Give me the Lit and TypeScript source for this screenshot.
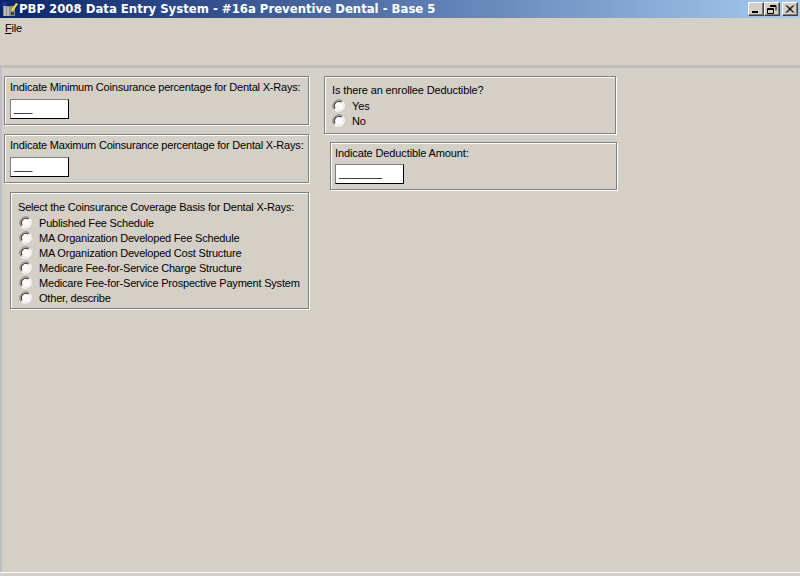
import { LitElement, html, css } from "lit";
import { customElement } from "lit/decorators.js";

const radio = html`<svg class="radio" width="13" height="13" viewBox="0 0 13 13">
  <circle cx="6.5" cy="6.5" r="4.6" fill="#fbfaf8"/>
  <path d="M1.9 10.2A6 6 0 0 1 10.2 1.9" fill="none" stroke="#808080" stroke-width="1"/>
  <path d="M3 9.3A4.6 4.6 0 0 1 9.3 3" fill="none" stroke="#303030" stroke-width="1.1"/>
  <path d="M11.1 2.8A6 6 0 0 1 2.8 11.1" fill="none" stroke="#ffffff" stroke-width="1.2"/>
</svg>`;

@customElement("app-root")
export class AppRoot extends LitElement {
  static styles = css`
    :host {
      display: flex;
      flex-direction: column;
      width: 800px;
      height: 576px;
      background: #d4d0c8;
      color: #000;
      font-family: "Liberation Sans", Arial, sans-serif;
      font-size: 11px;
      letter-spacing: -0.2px;
      line-height: 15px;
      overflow: hidden;
    }
    .title {
      height: 18px;
      flex: none;
      display: flex;
      align-items: center;
      background: linear-gradient(90deg, #0a246a 0%, #a6caf0 100%);
      color: #fff;
      font: bold 11.7px/18px "DejaVu Sans", Verdana, sans-serif;
      letter-spacing: 0;
      white-space: nowrap;
    }
    .appicon { flex: none; margin: 0 1px 0 2px; }
    .title-text { flex: 1; }
    .winbtns { display: flex; margin-right: 2px; }
    .winbtn {
      width: 16px;
      height: 14px;
      box-sizing: border-box;
      background: #d4d0c8;
      border: 1px solid;
      border-color: #fff #404040 #404040 #fff;
      box-shadow: inset -1px -1px 0 #808080;
      display: flex;
      align-items: center;
      justify-content: center;
    }
    .winbtn.gap { margin-right: 2px; }
    .menu {
      height: 47px;
      flex: none;
      box-sizing: border-box;
      padding: 3px 0 0 5px;
    }
    .band { height: 3px; flex: none; background: #bfbdb8; }
    .content {
      flex: none;
      height: 504px;
      border-left: 2px solid #bfbfc4;
      box-sizing: border-box;
      display: flex;
      align-items: flex-start;
    }
    .col-left {
      width: 307px;
      flex: none;
      padding-top: 8px;
      margin-left: 2px;
      display: flex;
      flex-direction: column;
      gap: 9px;
    }
    .col-right {
      margin-left: 13px;
      padding-top: 8px;
      display: flex;
      flex-direction: column;
      gap: 8px;
    }
    .group {
      box-sizing: border-box;
      border: 1px solid #808080;
      box-shadow: 1px 1px 0 #fff, inset 1px 1px 0 #fff;
    }
    .g-min { width: 305px; height: 49px; padding: 3px 0 0 5px; }
    .g-basis { width: 299px; height: 117px; margin-left: 6px; padding: 7px 0 0 7px; }
    .g-basis .label { margin-bottom: 1px; }
    .g-ded { width: 292px; height: 58px; padding: 6px 0 0 7px; letter-spacing: -0.12px; }
    .g-ded .label { margin-bottom: 1px; }
    .g-ded .radio { margin-left: 0; }
    .g-amt { width: 287px; height: 48px; margin-left: 6px; padding: 3px 0 0 4px; letter-spacing: -0.12px; }
    .label { height: 15px; white-space: nowrap; }
    .field {
      box-sizing: border-box;
      height: 20px;
      width: 59px;
      margin-top: 4px;
      background: #fff;
      border: 1px solid;
      border-color: #808080 #000 #000 #808080;
      padding-left: 3px;
      letter-spacing: 0;
      line-height: 17px;
      white-space: nowrap;
      overflow: hidden;
    }
    .field.wide { width: 69px; margin-top: 3px; }
    .row { display: flex; align-items: center; height: 15px; white-space: nowrap; }
    .radio { flex: none; margin: 0 0 2px 1px; }
    .row span { margin-left: 7px; }
    .foot { flex: none; height: 1px; background: #fff; }
  `;

  render() {
    const basis = [
      "Published Fee Schedule",
      "MA Organization Developed Fee Schedule",
      "MA Organization Developed Cost Structure",
      "Medicare Fee-for-Service Charge Structure",
      "Medicare Fee-for-Service Prospective Payment System",
      "Other, describe",
    ];
    return html`
      <div class="title">
        <svg class="appicon" width="16" height="16" viewBox="0 0 16 16">
          <rect x="0" y="1" width="5" height="5" fill="#1c2fa8"/>
          <path d="M1 5h12v10H1z" fill="#8f8f8f"/>
          <path d="M3 5v10M6 6v9" stroke="#e8e8e8" stroke-width="1"/>
          <path d="M9 9l5-7 2 1-5 7z" fill="#f4e020"/>
          <rect x="9" y="11" width="3" height="3" fill="#404040"/>
        </svg>
        <span class="title-text">PBP 2008 Data Entry System - #16a Preventive Dental - Base 5</span>
        <div class="winbtns">
          <div class="winbtn"><svg width="10" height="9" viewBox="0 0 10 9"><rect x="1" y="6" width="6" height="2" fill="#000"/></svg></div>
          <div class="winbtn gap"><svg width="10" height="9" viewBox="0 0 10 9"><path d="M3 .5h6v5M3 1.5h6M.5 3.5h6v5h-6zM.5 4.5h6" fill="none" stroke="#000"/></svg></div>
          <div class="winbtn"><svg width="10" height="9" viewBox="0 0 10 9"><path d="M1 .5l7 7M2 .5l7 7M8 .5l-7 7M9 .5l-7 7" fill="none" stroke="#000"/></svg></div>
        </div>
      </div>
      <div class="menu"><u>F</u>ile</div>
      <div class="band"></div>
      <div class="content">
        <div class="col-left">
          <div class="group g-min">
            <div class="label">Indicate Minimum Coinsurance percentage for Dental X-Rays:</div>
            <div class="field">___</div>
          </div>
          <div class="group g-min">
            <div class="label">Indicate Maximum Coinsurance percentage for Dental X-Rays:</div>
            <div class="field">___</div>
          </div>
          <div class="group g-basis">
            <div class="label">Select the Coinsurance Coverage Basis for Dental X-Rays:</div>
            ${basis.map((b) => html`<div class="row">${radio}<span>${b}</span></div>`)}
          </div>
        </div>
        <div class="col-right">
          <div class="group g-ded">
            <div class="label">Is there an enrollee Deductible?</div>
            <div class="row">${radio}<span>Yes</span></div>
            <div class="row">${radio}<span>No</span></div>
          </div>
          <div class="group g-amt">
            <div class="label">Indicate Deductible Amount:</div>
            <div class="field wide">_______</div>
          </div>
        </div>
      </div>
      <div class="foot"></div>
    `;
  }
}
